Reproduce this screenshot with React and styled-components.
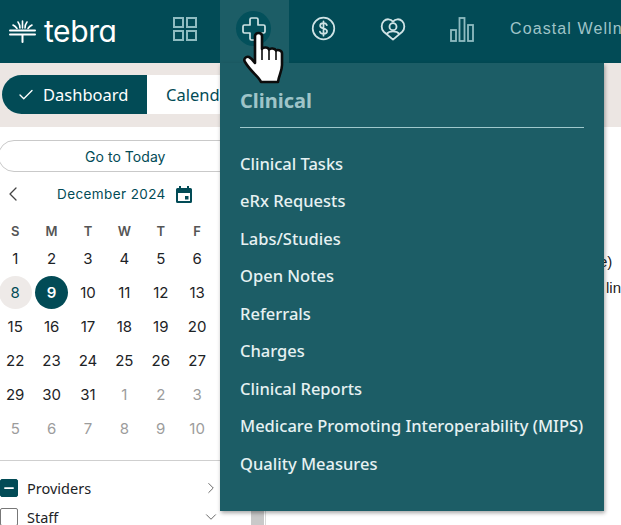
import styled, { createGlobalStyle } from 'styled-components';
import { Check, ChevronLeft, ChevronRight, ChevronDown, Minus } from 'lucide-react';

const GlobalStyle = createGlobalStyle`
  html, body {
    margin: 0;
    padding: 0;
    height: 100%;
    overflow: hidden;
    background: #fff;
  }
  #root {
    height: 100%;
  }
`;

const Page = styled.div`
  position: relative;
  width: 621px;
  height: 525px;
  overflow: hidden;
  display: flex;
  flex-direction: column;
  font-family: Inter, "Liberation Sans", sans-serif;
`;

const Header = styled.header`
  height: 63px;
  flex: none;
  display: flex;
  align-items: center;
  background: #024b56;
  white-space: nowrap;
`;

const Brand = styled.div`
  width: 167px;
  flex: none;
  display: flex;
  align-items: center;
  gap: 8px;
  padding-left: 9px;
  box-sizing: border-box;
  color: #fff;
`;

const BrandName = styled.span`
  font-family: Inter, sans-serif;
  font-feature-settings: 'cv11' 1;
  font-size: 30px;
  line-height: 1;
  letter-spacing: -0.4px;
  margin-top: -2px;
`;

const NavSlot = styled.div`
  width: ${(p) => p.$w}px;
  height: 63px;
  flex: none;
  display: flex;
  align-items: center;
  justify-content: center;
  padding-bottom: 6px;
  margin-right: ${(p) => p.$gap || 0}px;
  box-sizing: border-box;
  background: ${(p) => (p.$active ? '#1c5d66' : 'transparent')};
  color: ${(p) => (p.$dim ? '#8fbcc1' : '#cfe3e5')};
`;

const IconDisc = styled.div`
  width: 35px;
  height: 35px;
  margin-left: -2px;
  border-radius: 50%;
  background: #03505b;
  display: flex;
  align-items: center;
  justify-content: center;
  color: #cfe3e5;
`;

const Facility = styled.span`
  margin-left: 14px;
  margin-bottom: 6px;
  font-family: "Liberation Sans", sans-serif;
  font-size: 16px;
  letter-spacing: 1.1px;
  color: #9fc4c8;
`;

const Band = styled.div`
  height: 64px;
  flex: none;
  background: #ece6e3;
  display: flex;
  align-items: center;
  padding-left: 2px;
  padding-bottom: 1px;
  box-sizing: border-box;
`;

const Toggle = styled.div`
  display: flex;
  height: 39px;
  width: 280px;
  border-radius: 20px 0 0 20px;
  background: #fff;
  overflow: hidden;
`;

const ToggleOn = styled.div`
  width: 145px;
  flex: none;
  display: flex;
  align-items: center;
  gap: 8px;
  padding-left: 15px;
  box-sizing: border-box;
  background: #024b56;
  color: #fff;
  font-family: "Noto Sans", sans-serif;
  font-size: 16.5px;
`;

const ToggleOff = styled.div`
  padding-left: 19px;
  display: flex;
  align-items: center;
  color: #024b56;
  font-family: "Noto Sans", sans-serif;
  font-size: 16.5px;
`;

const Body = styled.div`
  flex: 1;
  min-height: 0;
  display: flex;
`;

const Sidebar = styled.aside`
  width: 250px;
  flex: none;
  background: #fff;
  padding-top: 13px;
  box-sizing: border-box;
  overflow: hidden;
`;

const TodayButton = styled.div`
  margin-left: -2px;
  height: 32px;
  border: 1px solid #c9c9c9;
  border-radius: 17px;
  box-sizing: border-box;
  display: flex;
  align-items: center;
  padding-left: 86px;
  color: #024b56;
  font-size: 14px;
  letter-spacing: 0.05px;
`;

const MonthBar = styled.div`
  height: 44px;
  display: flex;
  align-items: center;
  color: #444;
`;

const PrevMonth = styled(ChevronLeft)`
  margin-left: 1px;
  flex: none;
`;

const MonthLabel = styled.span`
  margin-left: 32px;
  margin-right: 10px;
  color: #024b56;
  font-size: 13.5px;
  letter-spacing: 0.4px;
`;

const DayGrid = styled.div`
  margin-left: -3px;
  margin-top: 1px;
  display: grid;
  grid-template-columns: repeat(7, 36.4px);
  grid-template-rows: 24.5px;
  grid-auto-rows: 34px;
`;

const HeadCell = styled.div`
  height: 27px;
  display: flex;
  align-items: center;
  justify-content: center;
  font-size: 13px;
  font-weight: 600;
  color: #555;
`;

const DayCell = styled.div`
  display: flex;
  align-items: center;
  justify-content: center;
  font-size: 15px;
  color: ${(p) => (p.$muted ? '#9c9c9c' : '#1d2326')};
`;

const DayMark = styled.span`
  width: 33px;
  height: 33px;
  border-radius: 50%;
  display: flex;
  align-items: center;
  justify-content: center;
  ${(p) => p.$selected && 'background: #024b56; color: #fff; font-weight: 600;'}
  ${(p) => p.$today && 'background: #eeeae8; color: #024b56;'}
`;

const Divider = styled.hr`
  margin: 14px 0 13px;
  border: 0;
  border-top: 1px solid #cfcfcf;
`;

const FilterRow = styled.div`
  height: 29px;
  display: flex;
  align-items: center;
  gap: 9px;
  color: #1d2326;
  font-family: "Noto Sans", sans-serif;
  font-size: 14.5px;
  padding-right: 30px;
`;

const Tick = styled.span`
  width: 18px;
  height: 18px;
  flex: none;
  box-sizing: border-box;
  border-radius: 2px;
  display: flex;
  align-items: center;
  justify-content: center;
  background: ${(p) => (p.$on ? '#024b56' : '#fff')};
  border: 1px solid ${(p) => (p.$on ? '#024b56' : '#777')};
  color: #fff;
`;

const FilterLabel = styled.span`
  flex: 1;
`;

const ScrollTrack = styled.div`
  width: 15px;
  flex: none;
  background: #fff;
  border-right: 1px solid #d8d8d8;
  display: flex;
  justify-content: center;
  align-items: flex-end;
`;

const ScrollThumb = styled.div`
  width: 13px;
  height: 40px;
  background: #c9c9c9;
`;

const Main = styled.main`
  flex: 1;
  min-width: 0;
  overflow: hidden;
  padding-top: 126px;
  font-family: "Liberation Sans", sans-serif;
  font-size: 15px;
  color: #222;
  white-space: nowrap;
`;

const MainLine = styled.div`
  height: 26px;
  padding-left: ${(p) => p.$x}px;
`;

const Menu = styled.nav`
  position: absolute;
  left: 220px;
  top: 63px;
  width: 384px;
  height: 448px;
  background: #1c5d66;
  box-shadow: 1px 2px 4px rgba(0, 0, 0, 0.35);
  padding: 26px 20px 0 20px;
  box-sizing: border-box;
`;

const MenuTitle = styled.div`
  font-family: "Noto Sans", sans-serif;
  font-weight: 700;
  font-size: 20px;
  line-height: 24px;
  color: #9fc4c8;
  padding-bottom: 14px;
  border-bottom: 1px solid #9fc8cc;
`;

const MenuList = styled.ul`
  list-style: none;
  margin: 16.6px 0 0;
  padding: 0;
`;

const MenuItem = styled.li`
  height: 37.5px;
  display: flex;
  align-items: center;
  font-family: "Noto Sans", sans-serif;
  font-weight: 500;
  font-size: 16.5px;
  color: #e6f1f2;
  white-space: nowrap;
`;

const Cursor = styled.svg`
  position: absolute;
  left: 241px;
  top: 30px;
`;

const TebraMark = () => (
  <svg width="27" height="23" viewBox="0 0 27 23" fill="none" stroke="currentColor" strokeWidth="2" strokeLinecap="round">
    <path d="M1 10.500h25M1 14.500h25M13.500 14.500V22" />
    <path d="M13.500 8V1M11 8c0-2-.5-4-2-6M16 8c0-2 .5-4 2-6M8 8.500C7 7 6 6 4 5M19 8.500C20 7 21 6 23 5" strokeWidth="1.600" />
  </svg>
);

const GridIcon = () => (
  <svg width="26" height="26" viewBox="0 0 26 26" fill="none" stroke="currentColor" strokeWidth="2">
    <rect x="2" y="2" width="9" height="9" />
    <rect x="15" y="2" width="9" height="9" />
    <rect x="2" y="15" width="9" height="9" />
    <rect x="15" y="15" width="9" height="9" />
  </svg>
);

const CrossIcon = () => (
  <svg width="26" height="26" viewBox="0 0 26 26" fill="none" stroke="currentColor" strokeWidth="1.700" strokeLinejoin="round">
    <path d="M9 3.500q0-1.500 1.500-1.500h5q1.500 0 1.500 1.500V9h5.500q1.500 0 1.500 1.500v5q0 1.500-1.500 1.500H17v5.500q0 1.500-1.500 1.500h-5Q9 24 9 22.500V17H3.500Q2 17 2 15.500v-5Q2 9 3.500 9H9z" />
  </svg>
);

const DollarIcon = () => (
  <svg width="25" height="25" viewBox="0 0 26 26" fill="none" stroke="currentColor" strokeWidth="1.800" strokeLinecap="round">
    <circle cx="13" cy="13" r="11.200" />
    <path d="M16.500 9.500c-.5-1.300-1.800-2-3.500-2-2 0-3.500 1-3.500 2.700 0 3.800 7.200 1.800 7.200 5.600 0 1.700-1.600 2.700-3.700 2.700-1.800 0-3.200-.8-3.700-2.200M13 5.500v15" />
  </svg>
);

const HeartPersonIcon = () => (
  <svg width="26" height="24" viewBox="0 0 28 26" fill="none" stroke="currentColor" strokeWidth="2" strokeLinejoin="round">
    <path d="M14 24.500 4 16C1 13 1 7.500 4 4.500c3-3 7.500-2.500 10 .5 2.500-3 7-3.500 10-.5 3 3 3 8.500 0 11.500z" />
    <circle cx="14" cy="10.500" r="3.800" />
    <path d="M7 18.500c1.500-2 4-3 7-3s5.500 1 7 3" />
  </svg>
);

const BarsIcon = () => (
  <svg width="26" height="26" viewBox="0 0 26 26" fill="none" stroke="currentColor" strokeWidth="1.800">
    <rect x="2" y="14" width="5" height="11" />
    <rect x="10.500" y="2" width="5" height="23" />
    <rect x="19" y="9" width="5" height="16" />
  </svg>
);

const CalendarIcon = () => (
  <svg width="16" height="17" viewBox="0 0 16 17" fill="#024b56">
    <path d="M3 0h2v2h6V0h2v2h1.500A1.500 1.500 0 0 1 16 3.500v12a1.500 1.500 0 0 1-1.500 1.500h-13A1.500 1.500 0 0 1 0 15.500v-12A1.500 1.500 0 0 1 1.500 2H3zM2 7v8h12V7z" />
    <rect x="9" y="10" width="3.500" height="3.500" />
  </svg>
);

const HandCursor = () => (
  <Cursor width="44" height="56" viewBox="0 0 44 56">
    <path
      d="M14 6c0-4 7-4 7 0v13c1-2 6-2 7 .5 1-1.500 6-1.500 7 1 1-1 6-.5 6 3V35c0 6-3 10-4 17H20c-2-5-10-10-16-20-2-3 1-6 4-5 2 1 4 3 6 6z"
      fill="#fff"
      stroke="#0c0c0c"
      strokeWidth="2.600"
      strokeLinejoin="round"
    />
    <path d="M21 19v11M28 20v10M35 21v9" stroke="#0c0c0c" strokeWidth="1.600" fill="none" />
  </Cursor>
);

const weekDays = ['S', 'M', 'T', 'W', 'T', 'F', 'S'];

// leading days belong to December, the rest spill into January
const days = [
  ...Array.from({ length: 31 }, (_, i) => ({ n: i + 1 })),
  ...Array.from({ length: 11 }, (_, i) => ({ n: i + 1, muted: true })),
];

const menuItems = [
  'Clinical Tasks',
  'eRx Requests',
  'Labs/Studies',
  'Open Notes',
  'Referrals',
  'Charges',
  'Clinical Reports',
  'Medicare Promoting Interoperability (MIPS)',
  'Quality Measures',
];

export default function App() {
  return (
    <>
      <GlobalStyle />
      <Page>
        <Header>
          <Brand>
            <TebraMark />
            <BrandName>tebra</BrandName>
          </Brand>
          <NavSlot $w={36} $gap={17} $dim><GridIcon /></NavSlot>
          <NavSlot $w={69} $active><IconDisc><CrossIcon /></IconDisc></NavSlot>
          <NavSlot $w={69}><DollarIcon /></NavSlot>
          <NavSlot $w={69}><HeartPersonIcon /></NavSlot>
          <NavSlot $w={69} $dim><BarsIcon /></NavSlot>
          <Facility>Coastal Welln</Facility>
        </Header>
        <Band>
          <Toggle>
            <ToggleOn><Check size={18} strokeWidth={1.8} />Dashboard</ToggleOn>
            <ToggleOff>Calendar</ToggleOff>
          </Toggle>
        </Band>
        <Body>
          <Sidebar>
            <TodayButton>Go to Today</TodayButton>
            <MonthBar>
              <PrevMonth size={24} strokeWidth={1.3} />
              <MonthLabel>December 2024</MonthLabel>
              <CalendarIcon />
            </MonthBar>
            <DayGrid>
              {weekDays.map((d, i) => <HeadCell key={i}>{d}</HeadCell>)}
              {days.map((d, i) => (
                <DayCell key={i} $muted={d.muted}>
                  <DayMark $today={!d.muted && d.n === 8} $selected={!d.muted && d.n === 9}>{d.n}</DayMark>
                </DayCell>
              ))}
            </DayGrid>
            <Divider />
            <FilterRow>
              <Tick $on><Minus size={14} strokeWidth={3} /></Tick>
              <FilterLabel>Providers</FilterLabel>
              <ChevronRight size={18} strokeWidth={1.3} color="#666" />
            </FilterRow>
            <FilterRow>
              <Tick />
              <FilterLabel>Staff</FilterLabel>
              <ChevronDown size={18} strokeWidth={1.3} color="#666" />
            </FilterRow>
          </Sidebar>
          <ScrollTrack><ScrollThumb /></ScrollTrack>
          <Main>
            <MainLine $x={333}>e)</MainLine>
            <MainLine $x={340}>lin</MainLine>
          </Main>
        </Body>
        <Menu>
          <MenuTitle>Clinical</MenuTitle>
          <MenuList>
            {menuItems.map((item) => <MenuItem key={item}>{item}</MenuItem>)}
          </MenuList>
        </Menu>
        <HandCursor />
      </Page>
    </>
  );
}
